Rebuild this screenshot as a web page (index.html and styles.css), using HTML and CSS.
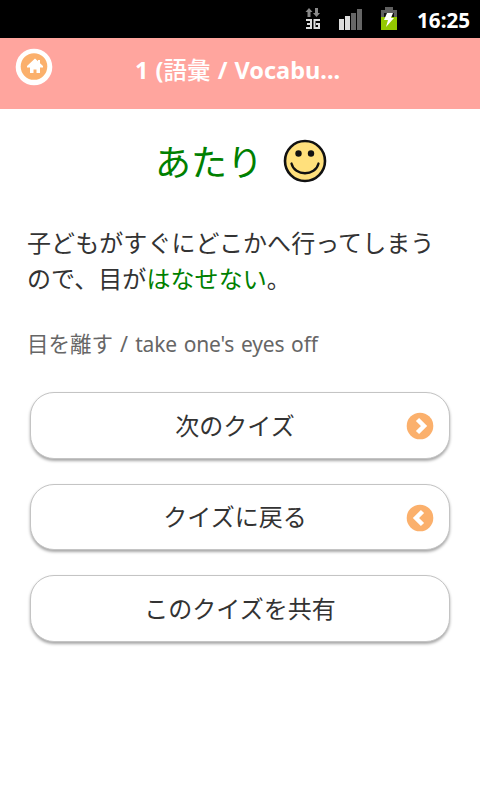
FILE: index.html
```html
<!DOCTYPE html>
<html lang="ja">
<head>
<meta charset="utf-8">
<title>Quiz</title>
<link rel="stylesheet" href="styles.css">
</head>
<body>
<div class="status">
  <svg class="net" width="16" height="24" viewBox="0 0 16 24"><path fill="#888" d="M4 0l3.500 4H5.500v5h-3V4H.5zM10 0h3v5h2l-3.500 4L8 5h2z"/><path fill="none" stroke="#ddd" stroke-width="2" d="M1 12h5v8H1M2 16h4M15 12H9.500v8H14v-4h-3"/></svg>
  <svg class="signal" width="24" height="22" viewBox="0 0 24 22"><path fill="#ddd" d="M0 10h5v11H0zM6 7h5v14H6z"/><path fill="#666" d="M12 4h5v17h-5zM18 0h5v21h-5z"/></svg>
  <svg class="battery" width="18" height="24" viewBox="0 0 18 24"><path fill="#606060" d="M5 0h8v3h4v8H1V3h4z"/><path fill="#111" d="M4 6h10v5H4z"/><path fill="#94c900" d="M1 10h16v13H1z"/><path fill="#fff" d="M7 6h6l-2 5h3L6 20l2-7H4z"/></svg>
  <span class="time">16:25</span>
</div>
<header class="header">
  <a class="home"><svg width="38" height="38" viewBox="0 0 38 38"><circle cx="19" cy="19" r="18.300" fill="#fff"/><circle cx="19" cy="18.500" r="13.300" fill="#fbb06c"/><path fill="#fff" d="M20 10.500l3 2.800V12h2v3.200l3 2.800v1.500h-3V25h-3.500v-3.500h-3V25H15v-5.500h-3V18z"/></svg></a>
  <h1 class="title">1 (<span class="kanji">語彙</span> / Vocabu...</h1>
</header>
<main class="content">
  <div class="result">
    <span class="verdict">あたり</span>
    <svg width="44" height="44" viewBox="0 0 44 44"><circle cx="22" cy="22" r="20" fill="#ffe07c" stroke="#111" stroke-width="2.600"/><circle cx="15.500" cy="14.500" r="3.200" fill="#111"/><circle cx="28" cy="14.500" r="3.200" fill="#111"/><path d="M8.500 24.500c3 13 24 13 27 0" fill="none" stroke="#111" stroke-width="2.300" stroke-linecap="round"/></svg>
  </div>
  <p class="sentence">子どもがすぐにどこかへ行ってしまう<br>ので、目が<span class="answer">はなせない</span>。</p>
  <p class="note">目を離す / <span class="meaning">take one's eyes off</span></p>
  <div class="buttons">
    <a class="button"><span>次のクイズ</span><svg class="arrow" width="28" height="28" viewBox="0 0 28 28"><circle cx="14" cy="14" r="13.300" fill="#fbb06c"/><path d="M11.500 7.500l6.500 6.500-6.500 6.500" fill="none" stroke="#fff" stroke-width="4.500"/></svg></a>
    <a class="button"><span>クイズに戻る</span><svg class="arrow" width="28" height="28" viewBox="0 0 28 28"><circle cx="14" cy="14" r="13.300" fill="#fbb06c"/><path d="M16.500 7.500L10 14l6.500 6.500" fill="none" stroke="#fff" stroke-width="4.500"/></svg></a>
    <a class="button"><span>このクイズを共有</span></a>
  </div>
</main>
</body>
</html>
```
FILE: styles.css
```css
* { box-sizing: border-box; }
body {
  margin: 0;
  height: 800px;
  overflow: hidden;
  background: #fff;
  color: #333;
  font-family: "Noto Sans", "Noto Sans CJK JP", sans-serif;
}
.status {
  display: flex;
  justify-content: flex-end;
  height: 38px;
  padding: 7px 10px 0 0;
  background: #000;
}
.net { margin: 1px 18px 0 0; }
.signal { margin: 2px 17px 0 0; }
.battery { margin-right: 19px; }
.time {
  width: 53px;
  color: #fff;
  font-size: 20.700px;
  font-weight: 700;
  line-height: 26px;
  white-space: nowrap;
}
.header {
  display: flex;
  height: 71px;
  padding: 10px 0 0 15px;
  background: #ffa59e;
}
.home { width: 38px; height: 38px; }
.title {
  margin: 4px 0 0 82px;
  color: #fff;
  font-size: 23.500px;
  font-weight: 700;
  line-height: 36px;
  word-spacing: 1px;
  white-space: nowrap;
}
.kanji { font-weight: 500; }
.content { padding: 29px 28px 0; }
.result {
  display: flex;
  align-items: center;
  padding-left: 127px;
  height: 46px;
}
.verdict {
  width: 128px;
  padding-top: 3px;
  color: #008000;
  font-size: 36px;
  line-height: 46px;
  white-space: nowrap;
}
.sentence {
  margin: 41px 0 0 -1px;
  font-size: 24px;
  line-height: 36px;
  letter-spacing: .080px;
  white-space: nowrap;
}
.answer { color: #008000; }
.note {
  margin: 31px 0 0 -1px;
  color: #666;
  font-size: 21.500px;
  line-height: 32px;
  word-spacing: 1.500px;
  white-space: nowrap;
}
.meaning { font-size: 21px; letter-spacing: -.180px; }
.buttons {
  display: grid;
  gap: 25px;
  margin: 32px 2px 0;
}
.button {
  position: relative;
  display: flex;
  align-items: center;
  justify-content: center;
  height: 66.500px;
  padding: 0 10px 2px 0;
  border: 1px solid #c4c4c4;
  border-radius: 24px;
  background: #fff;
  box-shadow: 0 2px 3px rgba(0, 0, 0, .35);
  font-size: 24px;
}
.button:last-child { padding-right: 0; }
.arrow { position: absolute; right: 15px; top: 19px; }
```
